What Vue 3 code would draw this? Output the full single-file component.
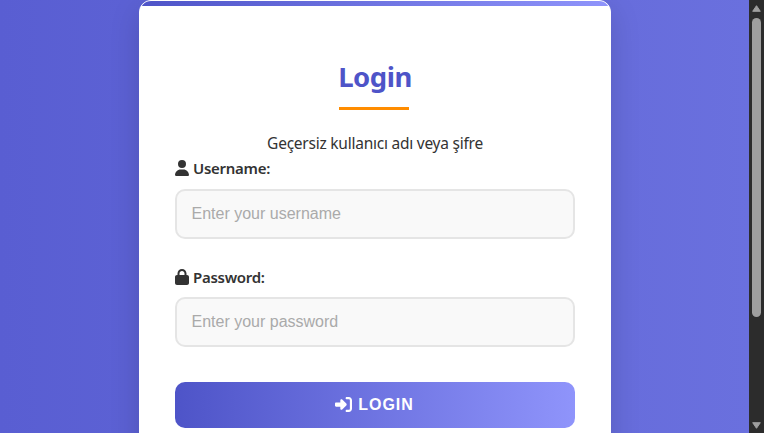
<script setup>
import { ref } from 'vue'

const username = ref('')
const password = ref('')
</script>

<template>
  <div class="window">
    <main class="page">
      <section class="card">
        <div class="accent"></div>
        <h2 class="title">Login</h2>
        <div class="underline"></div>
        <p class="message"><span>Geçersiz kullanıcı adı veya şifre</span></p>
        <form @submit.prevent>
          <label class="label" for="username">
            <svg class="icon" viewBox="0 0 448 512"><path d="M224 256a128 128 0 1 0 0-256 128 128 0 1 0 0 256zm-45.7 48C79.800 304 0 383.800 0 482.300 0 498.700 13.300 512 29.700 512h388.600c16.400 0 29.700-13.300 29.700-29.700C448 383.800 368.200 304 269.700 304z" /></svg>
            <span>Username:</span>
          </label>
          <input id="username" v-model="username" class="field" type="text" placeholder="Enter your username" />
          <label class="label second" for="password">
            <svg class="icon" viewBox="0 0 448 512"><path d="M144 144v48h160v-48c0-44.200-35.800-80-80-80s-80 35.800-80 80zm-64 48v-48C80 64.500 144.500 0 224 0s144 64.500 144 144v48h16c35.300 0 64 28.700 64 64v192c0 35.300-28.700 64-64 64H64c-35.300 0-64-28.700-64-64V256c0-35.300 28.700-64 64-64z" /></svg>
            <span>Password:</span>
          </label>
          <input id="password" v-model="password" class="field" type="password" placeholder="Enter your password" />
          <button class="submit" type="submit">
            <svg viewBox="0 0 512 512"><path d="M217.900 105.900 340.700 228.700c7.200 7.200 11.300 17.100 11.300 27.300s-4.100 20.100-11.300 27.300L217.900 406.100c-6.400 6.400-15 9.900-24 9.900-18.700 0-33.900-15.200-33.900-33.900V320H32c-17.700 0-32-14.300-32-32v-64c0-17.700 14.300-32 32-32h128v-62.100c0-18.700 15.200-33.900 33.900-33.900 9 0 17.600 3.600 24 9.900zM352 416h64c17.700 0 32-14.300 32-32V128c0-17.700-14.300-32-32-32h-64c-17.700 0-32-14.300-32-32s14.300-32 32-32h64c53 0 96 43 96 96v256c0 53-43 96-96 96h-64c-17.700 0-32-14.300-32-32s14.300-32 32-32z" /></svg>
            <span>LOGIN</span>
          </button>
        </form>
      </section>
    </main>
    <div class="scrollbar">
      <svg class="arrow" viewBox="0 0 9 7"><path d="M4.500 0.700 8.300 6.300H0.700z" /></svg>
      <div class="thumb"></div>
      <svg class="arrow down" viewBox="0 0 9 7"><path d="M4.500 6.300 0.700 0.700h7.600z" /></svg>
    </div>
  </div>
</template>

<style>
body {
  margin: 0;
  overflow: hidden;
}
</style>

<style scoped>
* {
  box-sizing: border-box;
}
.window {
  display: flex;
  width: 764px;
  height: 433px;
  overflow: hidden;
  font-family: "Noto Sans", sans-serif;
  color: #333;
}
.page {
  display: flex;
  justify-content: center;
  width: 749px;
  background: linear-gradient(90deg, #595ed2, #6a70de);
  overflow: hidden;
}
.card {
  width: 472px;
  height: 510px;
  margin-left: 1px;
  border: 1px solid #fff;
  border-radius: 12px;
  background: #fff;
  box-shadow: 0 10px 30px rgba(0, 0, 0, 0.15);
  overflow: hidden;
  padding: 0 35px;
}
.accent {
  height: 5px;
  margin: 0 -35px;
  background: linear-gradient(90deg, #4e54c8, #8f94fb);
}
.title {
  margin: 51px 0 0;
  height: 40px;
  line-height: 40px;
  font-size: 27.500px;
  letter-spacing: -0.500px;
  font-weight: 700;
  text-align: center;
  color: #4e54c8;
}
.underline {
  width: 70px;
  height: 3px;
  margin: 10px auto 0;
  position: relative;
  left: -1px;
  background: #ff8c00;
}
.message {
  margin: 22px 0 0;
  height: 22px;
  line-height: 22px;
  font-size: 15.500px;
  letter-spacing: -0.240px;
  text-align: center;
  white-space: nowrap;
}
.label {
  display: flex;
  align-items: center;
  height: 26px;
  margin-top: 1px;
  gap: 4.500px;
  font-size: 15px;
  letter-spacing: -0.280px;
  font-weight: 600;
}
.icon {
  width: 14px;
  height: 16px;
  margin-left: -0.500px;
  fill: #333;
}
.field {
  display: block;
  width: 400px;
  height: 50px;
  margin: 8px 0 0;
  padding: 0 14.500px;
  border: 2px solid #e5e5e5;
  border-radius: 10px;
  background: #f9f9f9;
  font: 16px "Liberation Sans", sans-serif;
  outline: none;
}
.field::placeholder {
  color: #aaa;
  opacity: 1;
}
.label.second {
  margin-top: 25px;
}
.label.second + .field {
  margin-top: 7px;
}
.submit {
  display: flex;
  align-items: center;
  justify-content: center;
  gap: 6px;
  width: 400px;
  height: 46px;
  margin-top: 35px;
  padding: 0 1px 1px 0;
  border: 0;
  border-radius: 10px;
  background: linear-gradient(90deg, #4e54c8, #8f94fb);
  color: #fff;
  font: bold 16px "Liberation Sans", sans-serif;
  letter-spacing: 1px;
}
.submit svg {
  width: 17px;
  height: 17px;
  fill: #fff;
}
.scrollbar {
  display: flex;
  flex-direction: column;
  align-items: center;
  width: 15px;
  padding: 5px 0 4px;
  background: #2c2c2c;
}
.arrow {
  width: 9px;
  height: 7px;
  fill: #9f9f9f;
  stroke: #9f9f9f;
  stroke-linejoin: round;
}
.thumb {
  width: 9px;
  height: 299px;
  margin-top: 6px;
  border-radius: 5px;
  background: #9f9f9f;
}
.arrow.down {
  margin-top: auto;
}
</style>
